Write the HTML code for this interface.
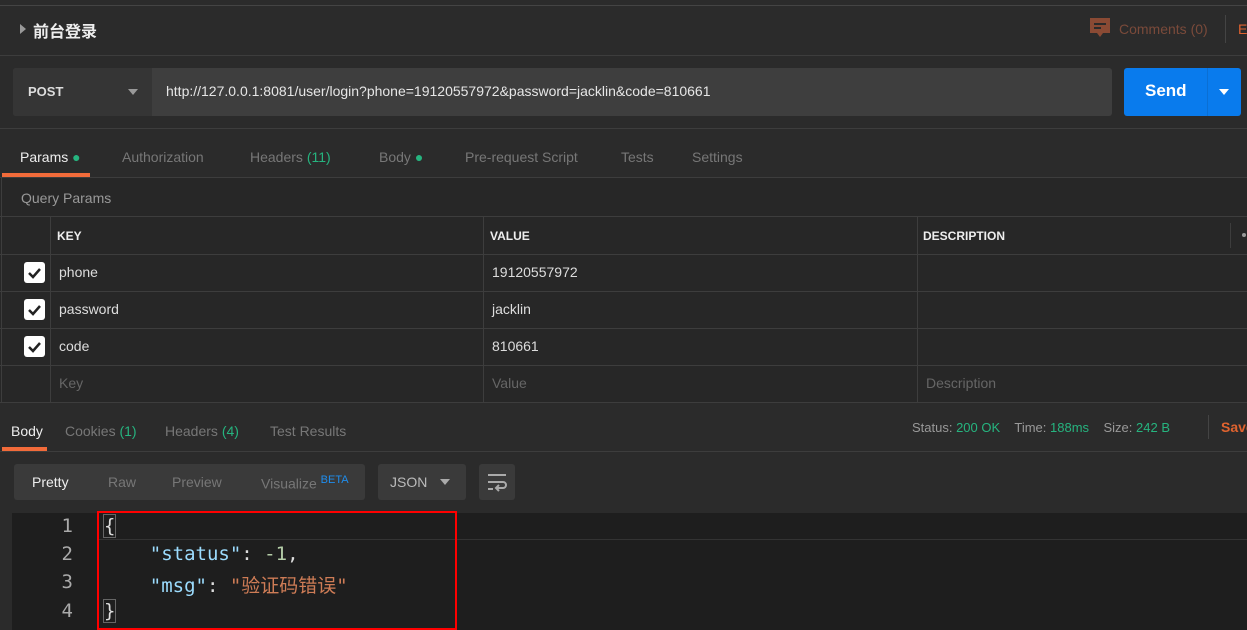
<!DOCTYPE html>
<html><head><meta charset="utf-8"><style>
*{box-sizing:border-box;margin:0;padding:0}
body{width:1247px;height:630px;overflow:hidden;background:#2b2b2b;font-family:"Liberation Sans","Noto Sans CJK SC",sans-serif;position:relative;color:#ccc;font-size:14px}
.a{position:absolute}
.hl{position:absolute;left:0;right:0;height:1px;background:#3d3d3d}
.vl{position:absolute;width:1px;background:#3d3d3d}
.tab{position:absolute;font-size:14px;color:#777}
.g{color:#26b47f}
.cb{position:absolute;left:24px;width:21px;height:21px;background:#fff;border-radius:3px}
.cell{position:absolute;font-size:14px;color:#ddd}
.ph{color:#666}
.ln{position:absolute;width:60px;text-align:right;left:13px;font-family:"DejaVu Sans Mono","Liberation Mono",monospace;font-size:19px;color:#aaa}
.code{position:absolute;left:104px;font-family:"DejaVu Sans Mono","Liberation Mono","Noto Sans CJK SC",monospace;font-size:19px;color:#ddd;white-space:pre}
</style></head><body>
<div class="a" style="left:0;top:0;width:1247px;height:6px;background:#2b2b2b;border-bottom:1px solid #444"></div>
<div class="a" style="left:20px;top:24px;width:0;height:0;border-left:6px solid #999;border-top:5px solid transparent;border-bottom:5px solid transparent"></div>
<div class="a" style="left:33px;top:18px;font-size:16px;font-weight:bold;color:#eee">前台登录</div>
<svg class="a" style="left:1089px;top:17px" width="22" height="22" viewBox="0 0 22 22"><path d="M1 1h20v15h-7l-3 4-3-4H1z" fill="#8a4a34"/><rect x="5" y="6" width="12" height="2" fill="#2b2b2b"/><rect x="5" y="10" width="7" height="2" fill="#2b2b2b"/></svg>
<div class="a" style="left:1119px;top:21px;font-size:14px;color:#7a4a3a">Comments (0)</div>
<div class="vl" style="left:1225px;top:15px;height:28px;background:#444"></div>
<div class="a" style="left:1238px;top:21px;font-size:14px;color:#e0632f">E</div>
<div class="hl" style="top:55px"></div>
<div class="a" style="left:13px;top:68px;width:1099px;height:48px;background:#3e3e3e;border-radius:3px"></div>
<div class="a" style="left:13px;top:68px;width:139px;height:48px;background:#353535;border-radius:3px 0 0 3px"></div>
<div class="a" style="left:28px;top:84px;font-size:13px;font-weight:bold;color:#ddd">POST</div>
<div class="a" style="left:128px;top:89px;border-top:6px solid #999;border-left:5px solid transparent;border-right:5px solid transparent"></div>
<div class="a" style="left:166px;top:83px;font-size:14px;color:#e6e6e6">http://127.0.0.1:8081/user/login?phone=19120557972&amp;password=jacklin&amp;code=810661</div>
<div class="a" style="left:1124px;top:68px;width:117px;height:48px;background:#097bed;border-radius:3px"></div>
<div class="vl" style="left:1207px;top:68px;height:48px;background:#0a6fd4"></div>
<div class="a" style="left:1145px;top:81px;font-size:17px;font-weight:bold;color:#fff">Send</div>
<div class="a" style="left:1219px;top:89px;border-top:6px solid #fff;border-left:5px solid transparent;border-right:5px solid transparent"></div>
<div class="hl" style="top:128px"></div>
<div class="tab" style="left:20px;top:149px;color:#eee">Params <span class="g">●</span></div>
<div class="tab" style="left:122px;top:149px">Authorization</div>
<div class="tab" style="left:250px;top:149px">Headers <span class="g">(11)</span></div>
<div class="tab" style="left:379px;top:149px">Body <span class="g">●</span></div>
<div class="tab" style="left:465px;top:149px">Pre-request Script</div>
<div class="tab" style="left:621px;top:149px">Tests</div>
<div class="tab" style="left:692px;top:149px">Settings</div>
<div class="a" style="left:2px;top:173px;width:88px;height:4px;background:#f26b3a"></div>
<div class="hl" style="top:177px"></div>
<div class="a" style="left:0;top:178px;width:1247px;height:225px;background:#272727"></div>
<div class="a" style="left:21px;top:190px;font-size:14px;color:#999">Query Params</div>
<div class="hl" style="top:216px"></div>
<div class="hl" style="top:254px"></div>
<div class="hl" style="top:291px"></div>
<div class="hl" style="top:328px"></div>
<div class="hl" style="top:365px"></div>
<div class="hl" style="top:402px"></div>
<div class="vl" style="left:1px;top:178px;height:225px"></div>
<div class="vl" style="left:50px;top:216px;height:187px"></div>
<div class="vl" style="left:483px;top:216px;height:187px"></div>
<div class="vl" style="left:917px;top:216px;height:187px"></div>
<div class="vl" style="left:1230px;top:223px;height:25px"></div>
<div class="a" style="left:1242px;top:233px;width:4px;height:4px;border-radius:2px;background:#999"></div>
<div class="cell" style="left:57px;top:229px;font-size:12px;font-weight:bold;color:#eee">KEY</div>
<div class="cell" style="left:490px;top:229px;font-size:12px;font-weight:bold;color:#eee">VALUE</div>
<div class="cell" style="left:923px;top:229px;font-size:12px;font-weight:bold;color:#eee">DESCRIPTION</div>
<div class="cb" style="top:262px"></div><div class="cb" style="top:299px"></div><div class="cb" style="top:336px"></div>
<svg class="a" style="left:24px;top:262px" width="21" height="95"><g fill="none" stroke="#222" stroke-width="2.5"><path d="M5 11l4 4 7-8"/><path d="M5 48l4 4 7-8"/><path d="M5 85l4 4 7-8"/></g></svg>
<div class="cell" style="left:59px;top:264px">phone</div><div class="cell" style="left:492px;top:264px">19120557972</div>
<div class="cell" style="left:59px;top:301px">password</div><div class="cell" style="left:492px;top:301px">jacklin</div>
<div class="cell" style="left:59px;top:338px">code</div><div class="cell" style="left:492px;top:338px">810661</div>
<div class="cell ph" style="left:59px;top:375px">Key</div><div class="cell ph" style="left:492px;top:375px">Value</div><div class="cell ph" style="left:926px;top:375px">Description</div>
<div class="tab" style="left:11px;top:423px;color:#eee">Body</div>
<div class="tab" style="left:65px;top:423px">Cookies <span class="g">(1)</span></div>
<div class="tab" style="left:165px;top:423px">Headers <span class="g">(4)</span></div>
<div class="tab" style="left:270px;top:423px">Test Results</div>
<div class="a" style="left:912px;top:420px;font-size:13px;color:#999">Status: <span class="g">200 OK</span>&nbsp;&nbsp;&nbsp; Time: <span class="g">188ms</span>&nbsp;&nbsp;&nbsp; Size: <span class="g">242 B</span></div>
<div class="vl" style="left:1208px;top:415px;height:24px;background:#444"></div>
<div class="a" style="left:1221px;top:419px;font-size:14px;font-weight:bold;color:#e0632f">Save</div>
<div class="a" style="left:2px;top:447px;width:45px;height:4px;background:#f26b3a"></div>
<div class="hl" style="top:451px"></div>
<div class="a" style="left:14px;top:464px;width:351px;height:36px;background:#3a3a3a;border-radius:3px"></div>
<div class="a" style="left:32px;top:474px;font-size:14px;color:#eee">Pretty</div>
<div class="a" style="left:108px;top:474px;font-size:14px;color:#777">Raw</div>
<div class="a" style="left:172px;top:474px;font-size:14px;color:#777">Preview</div>
<div class="a" style="left:261px;top:474px;font-size:14px;color:#777">Visualize <sup style="color:#1f8ded;font-size:11px">BETA</sup></div>
<div class="a" style="left:378px;top:464px;width:88px;height:36px;background:#3a3a3a;border-radius:3px"></div>
<div class="a" style="left:390px;top:474px;font-size:14px;color:#bbb">JSON</div>
<div class="a" style="left:440px;top:479px;border-top:6px solid #aaa;border-left:5px solid transparent;border-right:5px solid transparent"></div>
<div class="a" style="left:479px;top:464px;width:36px;height:36px;background:#3a3a3a;border-radius:3px"></div>
<svg class="a" style="left:486px;top:471px" width="22" height="22"><g fill="none" stroke="#aaa" stroke-width="2"><path d="M2 4h18M2 11h15a3 3 0 0 1 0 6h-6M2 18h5"/><path d="M13 14l-3 3 3 3"/></g></svg>
<div class="a" style="left:12px;top:513px;width:1235px;height:117px;background:#1e1e1e"></div>
<div class="a" style="left:98px;top:539px;width:1149px;height:1px;background:#333"></div>
<div class="ln" style="top:515px">1</div><div class="ln" style="top:543px">2</div><div class="ln" style="top:571px">3</div><div class="ln" style="top:600px">4</div>
<div class="code" style="top:515px"><span style="outline:1px solid #666">{</span></div>
<div class="code" style="top:543px">    <span style="color:#9cdcfe">"status"</span>: <span style="color:#b5cea8">-1</span>,</div>
<div class="code" style="top:571px">    <span style="color:#9cdcfe">"msg"</span>: <span style="color:#ce7c56">"验证码错误"</span></div>
<div class="code" style="top:600px"><span style="outline:1px solid #666">}</span></div>
<div class="a" style="left:97px;top:511px;width:360px;height:119px;border:2px solid #f00"></div>
</body></html>
